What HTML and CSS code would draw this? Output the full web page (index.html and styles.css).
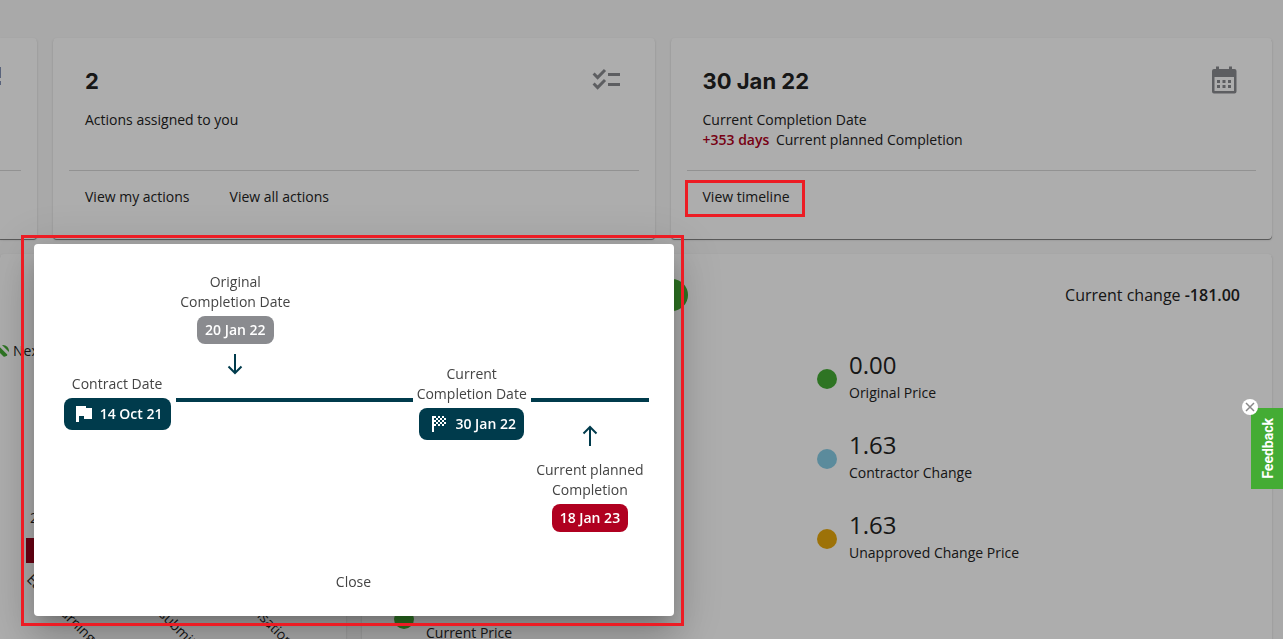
FILE: index.html
```html
<!DOCTYPE html>
<html lang="en">
<head>
<meta charset="utf-8">
<title>Contract dashboard</title>
<link rel="stylesheet" href="styles.css">
</head>
<body>
<main class="dashboard">
  <section class="summary">
    <article class="card card-edge">
      <svg class="edge-icon" viewBox="0 0 24 24" aria-hidden="true"><path d="M2 3h21v11H2zM2 17h21v4H2z"/></svg>
      <div class="card-actions"></div>
    </article>
    <article class="card">
      <div class="card-body">
        <div>
          <h2 class="card-title">2</h2>
          <p class="text">Actions assigned to you</p>
        </div>
        <svg class="card-icon" viewBox="0 0 32 32" aria-hidden="true"><path d="M2.600 9.500l4 4 7.400-7.500M2.600 19.500l4 4 7.400-7.500" fill="none" stroke="#8a8b8f" stroke-width="3"/><path d="M17 9h12v3H17zM17 19h12v3H17z" fill="#8a8b8f"/></svg>
      </div>
      <div class="card-actions">
        <button class="link-button" type="button">View my actions</button>
        <button class="link-button" type="button">View all actions</button>
      </div>
    </article>
    <article class="card">
      <div class="card-body">
        <div>
          <h2 class="card-title">30 Jan 22</h2>
          <p class="text">Current Completion Date</p>
          <p class="text"><strong class="overdue">+353 days</strong> Current planned Completion</p>
        </div>
        <svg class="card-icon" viewBox="0 0 32 32" aria-hidden="true"><path fill="#8a8b8f" fill-rule="evenodd" d="M8 2.500h3V5h10V2.500h3V5h2.500a2 2 0 0 1 2 2v20.500a2 2 0 0 1-2 2h-20.500a2 2 0 0 1-2-2V7a2 2 0 0 1 2-2H8zM6.500 13v14h19.500V13z"/><path fill="#8a8b8f" d="M9 16h3v3H9zM14.500 16h3v3h-3zM20 16h3v3h-3zM9 21h3v3H9zM14.500 21h3v3h-3zM20 21h3v3h-3z"/></svg>
      </div>
      <div class="card-actions">
        <button class="link-button" type="button">View timeline</button>
      </div>
    </article>
  </section>

  <section class="details">
    <article class="card chart-card">
      <svg class="chart" width="346" height="400" role="img" aria-label="Events by type">
        <defs>
          <pattern id="hatch" width="7" height="7" patternUnits="userSpaceOnUse" patternTransform="rotate(-45)"><rect width="4" height="7" fill="#44ac34"/></pattern>
        </defs>
        <circle cx="3" cy="97" r="6" fill="url(#hatch)"/>
        <text x="13" y="102">Next</text>
        <text x="30" y="269">2</text>
        <rect x="26" y="284" width="48" height="25" fill="#9f001c"/>
        <text transform="translate(26 326) rotate(45)">Early Warning</text>
        <text transform="translate(130 333) rotate(45)">To be submitted</text>
        <text transform="translate(220 326) rotate(45)">Compensation</text>
      </svg>
    </article>
    <article class="card price-card">
      <header class="price-header">
        <span class="badge"></span>
        <p class="change">Current change <strong>-181.00</strong></p>
      </header>
      <div class="prices">
        <div class="price-list price-total">
          <div class="price"><span class="dot green"></span><span class="price-label">Current Price</span></div>
        </div>
        <div class="price-list">
          <div class="price"><span class="dot green"></span><div class="price-text"><div class="price-value">0.00</div><div class="price-label">Original Price</div></div></div>
          <div class="price"><span class="dot blue"></span><div class="price-text"><div class="price-value">1.63</div><div class="price-label">Contractor Change</div></div></div>
          <div class="price"><span class="dot amber"></span><div class="price-text"><div class="price-value">1.63</div><div class="price-label">Unapproved Change Price</div></div></div>
        </div>
      </div>
    </article>
  </section>
</main>

<div class="backdrop"></div>
<div class="timeline-mark"></div>

<div class="dialog" role="dialog" aria-label="Timeline">
  <div class="timeline">
    <div class="line line-before"></div>
    <div class="line line-after"></div>
    <div class="node contract">
      <span>Contract Date</span>
      <span class="pill pill-main">
        <svg class="flag" viewBox="0 0 22 20" aria-hidden="true"><path fill="#fff" d="M4 2h10v2h6v11h-8v-3H7v6H4z"/></svg>14 Oct 21</span>
    </div>
    <div class="node original">
      <span>Original<br>Completion Date</span>
      <span class="pill pill-grey">20 Jan 22</span>
      <svg class="arrow" viewBox="0 0 24 24" aria-hidden="true"><path d="M12 2v19M5.500 14.500L12 21l6.500-6.500"/></svg>
    </div>
    <div class="node current">
      <span>Current<br>Completion Date</span>
      <span class="pill pill-main">
        <svg class="flag" viewBox="0 0 22 20" aria-hidden="true"><path fill="#fff" d="M5 2h2v16H5z"/><path fill="#fff" d="M7 2h2v2H7zM11 2h2v2h-2zM15 2h2v2h-2zM9 4h2v2H9zM13 4h2v2h-2zM17 4h2v2h-2zM7 6h2v2H7zM11 6h2v2h-2zM15 6h2v2h-2zM9 8h2v2H9zM13 8h2v2h-2zM17 8h2v2h-2zM7 10h2v2H7zM11 10h2v2h-2zM15 10h2v2h-2z"/></svg>30 Jan 22</span>
    </div>
    <div class="node planned">
      <svg class="arrow" viewBox="0 0 24 24" aria-hidden="true"><path d="M12 22V3M5.500 9.500L12 3l6.500 6.500"/></svg>
      <span>Current planned<br>Completion</span>
      <span class="pill pill-red">18 Jan 23</span>
    </div>
  </div>
  <button class="link-button" type="button">Close</button>
</div>

<div class="feedback">
  <button class="feedback-tab" type="button">Feedback</button>
  <button class="feedback-close" type="button" aria-label="Hide feedback">
    <svg viewBox="0 0 16 16" aria-hidden="true"><path d="M4 4l8 8M12 4l-8 8" stroke="#888" stroke-width="1.500"/></svg>
  </button>
</div>
</body>
</html>
```
FILE: styles.css
```css
* { box-sizing: border-box; }

body {
  margin: 0;
  height: 100vh;
  overflow: hidden;
  background: #fafafa;
  color: #222;
  font: 14px/20px "Open Sans", sans-serif;
}

h2, p { margin: 0; }

button {
  border: 0;
  background: none;
  color: inherit;
  font: inherit;
  cursor: pointer;
}

.dashboard {
  display: grid;
  gap: 15px;
  padding: 38px 11px 0 0;
}

.summary {
  display: grid;
  grid-template-columns: 37px 1fr 1fr;
  gap: 16px;
}

.details {
  display: grid;
  grid-template-columns: 346px 1fr;
  gap: 16px;
}

.card {
  display: flex;
  flex-direction: column;
  padding: 0 16px;
  border-radius: 4px;
  background: #fff;
  box-shadow: 0 1px 0 rgba(0, 0, 0, .35), 0 1px 1px rgba(0, 0, 0, .14), 0 1px 3px rgba(0, 0, 0, .12);
}

.card-edge {
  justify-content: space-between;
  padding-left: 0;
  border-radius: 0 4px 4px 0;
}

.edge-icon {
  width: 24px;
  height: 24px;
  margin: 26px 0 0 -22px;
  fill: #8492b5;
}

.card-body {
  display: flex;
  flex: 1;
  justify-content: space-between;
  min-height: 132px;
  padding: 26px 16px 20px;
}

.card-title {
  margin-bottom: 12px;
  font: 700 22px/34px Inter, sans-serif;
}

.card-icon {
  width: 32px;
  height: 32px;
}

.overdue {
  margin-right: 3px;
  color: #b00020;
  font-weight: 600;
}

.card-actions {
  display: flex;
  gap: 8px;
  min-height: 69px;
  padding-top: 8px;
  border-top: 1px solid #d8d8d8;
}

.link-button {
  height: 36px;
  padding: 0 16px;
}

.chart-card {
  height: 440px;
  padding: 0;
  overflow: hidden;
}

.chart { fill: #222; }

.price-card { padding: 25px 32px; }

.price-header {
  display: grid;
  grid-template-columns: 262px 32px 1fr;
  align-items: center;
}

.badge {
  grid-column: 2;
  height: 32px;
  border-radius: 50%;
  background: #44ac34;
}

.change {
  font-size: 16px;
  text-align: right;
}

.change strong { font-weight: 600; }

.prices {
  display: grid;
  grid-template-columns: 1fr 1fr;
  padding-top: 38px;
}

.price-list {
  display: grid;
  align-content: start;
  gap: 20px;
}

.price {
  display: flex;
  align-items: center;
  gap: 12px;
  min-height: 60px;
}

.price-text { padding-bottom: 4px; }

.price-total {
  align-content: end;
  height: 298px;
}

.price-total .price {
  align-items: start;
  min-height: 38px;
}

.price-total .price-label { padding-top: 12px; }

.price-value {
  font-size: 24px;
  line-height: 32px;
}

.price-label { line-height: 24px; }

.dot {
  width: 20px;
  height: 20px;
  border-radius: 50%;
}

.green { background: #44ac34; }
.blue { background: #87cde6; }
.amber { background: #e8a90c; }

.backdrop {
  position: fixed;
  inset: 0;
  background: rgba(0, 0, 0, .32);
}

/* Callout frames drawn over the page */
.timeline-mark,
.dialog::before {
  position: absolute;
  border: 3px solid #ed1c24;
  content: "";
}

.timeline-mark {
  top: 180px;
  left: 685px;
  width: 120px;
  height: 37px;
  pointer-events: none;
}

.dialog::before {
  inset: -9px -10px -10px -13px;
  pointer-events: none;
}

.dialog {
  position: absolute;
  top: 244px;
  left: 34px;
  display: flex;
  flex-direction: column;
  align-items: center;
  gap: 32px;
  width: 640px;
  padding: 28px 25px 16px 24px;
  border-radius: 4px;
  background: #fff;
  box-shadow: 0 11px 15px -7px rgba(0, 0, 0, .2), 0 24px 38px 3px rgba(0, 0, 0, .14), 0 9px 46px 8px rgba(0, 0, 0, .12);
  color: #444;
}

.timeline {
  display: grid;
  grid-template-columns: repeat(5, 1fr);
  grid-template-rows: 126px 4px 130px;
  width: 100%;
  text-align: center;
}

.line {
  grid-row: 2;
  background: #003b4c;
}

.line-before { grid-column: 2 / 4; }
.line-after { grid-column: 5; }

.node {
  display: flex;
  flex-direction: column;
  align-items: center;
  gap: 4px;
}

.contract { grid-area: 1 / 1 / 4 / 2; justify-content: center; }
.original { grid-area: 1 / 2; }
.current { grid-area: 1 / 4 / 4 / 5; justify-content: center; }
.planned { grid-area: 3 / 5; justify-content: flex-end; }

.pill {
  display: flex;
  align-items: center;
  padding: 4px 8px;
  border-radius: 8px;
  color: #fff;
  font-weight: 600;
}

.pill-main {
  gap: 6px;
  padding: 6px 8px;
  background: #003b4c;
}

.pill-grey { background: #8a8b8f; }
.pill-red { background: #b00020; }

.flag {
  width: 22px;
  height: 20px;
}

.arrow {
  width: 24px;
  height: 24px;
  margin: 4px 0 8px;
  fill: none;
  stroke: #003b4c;
  stroke-width: 2;
}

.feedback {
  position: fixed;
  top: 408px;
  right: 0;
}

.feedback-tab {
  width: 32px;
  height: 81px;
  padding: 0 0 0 3px;
  background: #44ac34;
  color: #fff;
  font: 700 14px/29px Roboto, sans-serif;
  writing-mode: sideways-lr;
}

.feedback-close {
  position: absolute;
  top: -9px;
  left: -9px;
  width: 16px;
  height: 16px;
  padding: 0;
  border-radius: 50%;
  background: #fff;
}

.feedback-close svg { display: block; }
```
